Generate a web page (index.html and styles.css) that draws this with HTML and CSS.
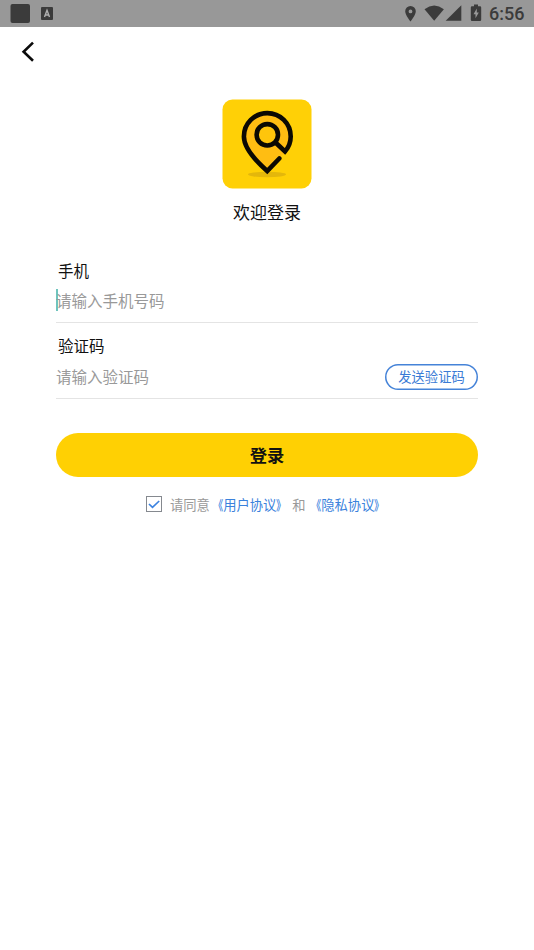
FILE: index.html
```html
<!DOCTYPE html>
<html lang="zh-CN">
<head>
<meta charset="utf-8">
<title>欢迎登录</title>
<link rel="stylesheet" href="styles.css">
</head>
<body>
<header class="status">
  <svg width="60" height="27" viewBox="0 0 60 27">
    <rect x="10.500" y="4" width="19.500" height="19" rx="2" fill="#3b3b3b"/>
    <rect x="41" y="7" width="12" height="13" rx="1" fill="#3b3b3b"/>
    <path d="M44.500 17 47 10.200 49.500 17M45.300 15h3.400" fill="none" stroke="#b0b0b0" stroke-width="1.400"/>
  </svg>
  <svg class="signals" width="84" height="27" viewBox="400 0 84 27">
    <g fill="#3b3b3b">
      <path fill-rule="evenodd" d="M410.500 6a5.300 5.300 0 0 0-5.300 5.300c0 4 5.300 10.200 5.300 10.200s5.300-6.200 5.300-10.200a5.300 5.300 0 0 0-5.300-5.300zm0 3.500a1.900 1.900 0 1 1 0 3.800 1.900 1.900 0 0 1 0-3.800z"/>
      <path d="M424.500 9.200q9.700-7.200 19.400 0L434.200 20.800z"/>
      <path d="M461.300 5.200v15.600h-15.600z"/>
      <path fill-rule="evenodd" d="M474 4.500h4v1.700h2q1.200 0 1.200 1.200v12.300q0 1.200-1.200 1.200h-8q-1.200 0-1.200-1.200V7.400q0-1.200 1.200-1.200h2zM476.800 8.500l-3.300 5.700h2v4l3.300-5.700h-2z"/>
    </g>
  </svg>
  <span class="clock">6:56</span>
</header>
<nav class="nav">
  <svg width="14" height="22" viewBox="0 0 14 22"><path d="M12 1.600 2.600 10.700l9.400 9.100" fill="none" stroke="#0b0b0b" stroke-width="2.600"/></svg>
</nav>
<main class="login">
  <svg class="logo" width="90" height="90" viewBox="222 99 90 90">
    <rect x="222.500" y="99.500" width="89" height="89" rx="10" fill="#ffd006"/>
    <ellipse cx="267" cy="174.500" rx="19" ry="2.700" fill="#e4b70b"/>
    <path d="M285.500 151.500C289 147 290.700 141.500 290.700 136.500A23.400 23.400 0 0 0 243.900 136.500C243.900 149 257 162 267.200 171L279.300 158.500z" fill="#ffbd12"/>
    <circle cx="267.300" cy="134.800" r="10.700" fill="#ffc50b"/>
    <g fill="none" stroke="#0b0903" stroke-width="4.600" stroke-linecap="round" stroke-linejoin="miter">
      <path d="M275.500 142.500 285 151.500C289 147 290.700 141.500 290.700 136.500A23.400 23.400 0 0 0 243.900 136.500C243.900 149 257 162 267.200 171L279.300 158.500"/>
      <circle cx="267.300" cy="134.800" r="10.700"/>
    </g>
  </svg>
  <h1 class="title">欢迎登录</h1>
  <section class="field">
    <label class="label">手机</label>
    <div class="entry"><i class="caret"></i><span class="hint">请输入手机号码</span></div>
  </section>
  <section class="field">
    <label class="label">验证码</label>
    <div class="entry"><span class="hint">请输入验证码</span><button class="send">发送验证码</button></div>
  </section>
  <button class="submit">登录</button>
  <div class="agree">
    <svg class="check" width="16" height="16" viewBox="0 0 16 16"><rect x=".5" y=".5" width="15" height="15" fill="#fff" stroke="#85898f"/><path d="m3 8 3.500 3.300L13.200 5" fill="none" stroke="#3b82e0" stroke-width="1.700"/></svg>
    <span>请同意</span><a><span class="open">《</span>用户协议<span class="close">》</span></a><span class="and">和</span><a><span class="open">《</span>隐私协议<span class="close">》</span></a>
  </div>
</main>
</body>
</html>
```
FILE: styles.css
```css
* { box-sizing: border-box; }
body {
  margin: 0;
  min-height: 950px;
  background: #fff;
  color: #111;
  font-family: "Noto Sans CJK SC", sans-serif;
}
svg { display: block; flex: none; }
button { font-family: inherit; padding: 0; }
.status {
  display: flex;
  align-items: center;
  height: 27px;
  padding-right: 9px;
  background: #989898;
}
.signals { margin-left: auto; }
.clock {
  width: 36px;
  margin-left: 5px;
  font: 500 18px/27px Roboto, sans-serif;
  color: #3b3b3b;
  white-space: nowrap;
}
.nav { height: 72px; padding: 14px 0 0 21px; }
.login {
  display: flex;
  flex-direction: column;
  align-items: stretch;
  padding: 0 56px;
}
.logo { align-self: center; }
.title {
  margin: 10px 0 33px;
  font-size: 17px;
  line-height: 26px;
  font-weight: 400;
  text-align: center;
}
.field {
  height: 76px;
  border-bottom: 1px solid #e4e4e4;
}
.field:first-of-type { height: 65px; }
.field + .field { padding-top: 10px; }
.field + .field .entry { height: 38px; }
.label {
  display: block;
  padding-left: 2px;
  font-size: 15.500px;
  line-height: 24px;
}
.entry {
  display: flex;
  align-items: center;
  height: 36px;
}
.caret {
  width: 2px;
  height: 22px;
  margin-right: -2px;
  background: #6fc4bd;
}
.hint { font-size: 15.500px; line-height: 24px; color: #999; }
.send {
  width: 93px;
  height: 26px;
  margin: 1px 0 0 auto;
  border: 0;
  box-shadow: inset 0 0 0 1.500px #4583d8;
  border-radius: 13px;
  background: #fff;
  color: #3a7bd5;
  font-size: 13.300px;
  line-height: 26px;
}
.submit {
  height: 44px;
  margin-top: 34px;
  padding-bottom: 2px;
  border: 0;
  border-radius: 22px;
  background: #ffd003;
  color: #111;
  font-size: 17.300px;
  font-weight: 700;
}
.agree {
  display: flex;
  align-items: center;
  height: 20px;
  margin: 18px 0 0 90px;
  font-size: 13.300px;
  line-height: 20px;
  color: #999;
  white-space: nowrap;
}
.check { margin: 0 8px 2px 0; }
.agree a { color: #3a82dc; }
.open, .close { display: inline-block; font-weight: 500; }
.open { transform: scaleX(.75); transform-origin: right; }
.close { transform: scaleX(.75); transform-origin: left; }
.and { margin: 0 2.500px; }
```
